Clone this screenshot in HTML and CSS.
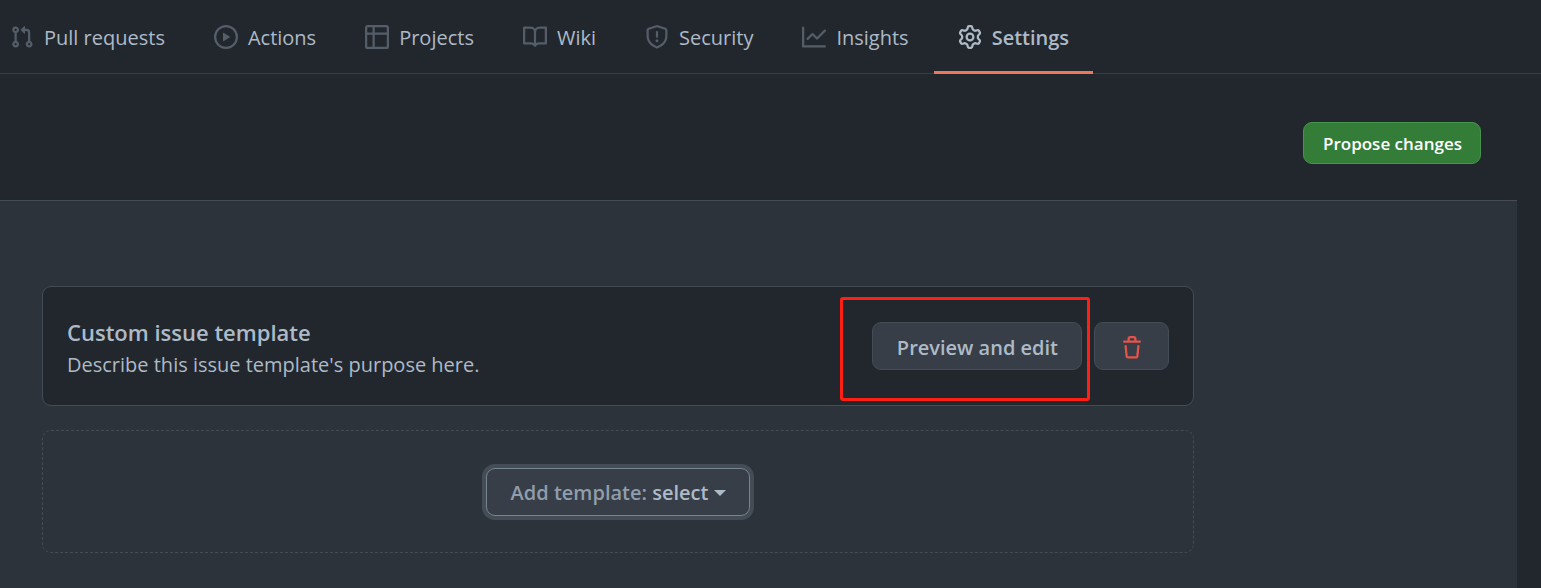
FILE: index.html
```html
<!DOCTYPE html>
<html lang="en">
<head>
<meta charset="utf-8">
<title>Settings - Issue templates</title>
<link rel="stylesheet" href="styles.css">
</head>
<body>
<nav class="tabs" aria-label="Repository">
  <a class="tab" href="#"><svg class="icon" viewBox="0 0 16 16" aria-hidden="true"><path fill-rule="evenodd" d="M7.177 3.073L9.573.677A.25.25 0 0110 .854v4.792a.25.25 0 01-.427.177L7.177 3.427a.25.25 0 010-.354zM3.75 2.5a.75.75 0 100 1.5.75.75 0 000-1.5zm-2.25.75a2.25 2.25 0 113 2.122v5.256a2.251 2.251 0 11-1.5 0V5.372A2.25 2.25 0 011.5 3.25zM11 2.5h-1V4h1a1 1 0 011 1v5.628a2.251 2.251 0 101.5 0V5A2.5 2.5 0 0011 2.5zm1 10.25a.75.75 0 111.5 0 .75.75 0 01-1.5 0zM3.75 12a.75.75 0 100 1.5.75.75 0 000-1.5z"/></svg>Pull requests</a>
  <a class="tab" href="#"><svg class="icon" viewBox="0 0 16 16" aria-hidden="true"><path fill-rule="evenodd" d="M1.5 8a6.5 6.5 0 1113 0 6.5 6.5 0 01-13 0zM8 0a8 8 0 100 16A8 8 0 008 0zM6.379 5.227A.25.25 0 006 5.442v5.117a.25.25 0 00.379.214l4.264-2.559a.25.25 0 000-.428L6.379 5.227z"/></svg>Actions</a>
  <a class="tab" href="#"><svg class="icon" viewBox="0 0 16 16" aria-hidden="true"><path fill-rule="evenodd" d="M0 1.75C0 .784.784 0 1.75 0h12.5C15.216 0 16 .784 16 1.75v12.5A1.75 1.75 0 0114.25 16H1.75A1.75 1.75 0 010 14.25V1.75zM1.5 6.5v7.75c0 .138.112.25.25.25H5v-8H1.500zM5 5H1.500V1.750a.25.25 0 01.25-.25H5V5zm1.500 1.500v8h7.750a.25.25 0 00.25-.25V6.500h-8zm8-1.500h-8V1.500h7.750a.25.25 0 01.25.25V5z"/></svg>Projects</a>
  <a class="tab" href="#"><svg class="icon" viewBox="0 0 16 16" aria-hidden="true"><path fill-rule="evenodd" d="M0 1.75A.75.75 0 01.75 1h4.253c1.227 0 2.317.59 3 1.501A3.744 3.744 0 0111.006 1h4.245a.75.75 0 01.75.75v10.5a.75.75 0 01-.75.75h-4.507a2.25 2.25 0 00-1.591.659l-.622.621a.75.75 0 01-1.06 0l-.622-.621A2.25 2.25 0 005.258 13H.75a.75.75 0 01-.75-.75V1.75zm8.755 3a2.25 2.25 0 012.25-2.25H14.500v9h-3.757c-.71 0-1.4.201-1.992.572l.004-7.322zm-1.504 7.324l.004-5.073-.002-2.253A2.25 2.25 0 005.003 2.500H1.500v9h3.757a3.750 3.750 0 011.994.574z"/></svg>Wiki</a>
  <a class="tab" href="#"><svg class="icon" viewBox="0 0 16 16" aria-hidden="true"><path fill-rule="evenodd" d="M7.467.133a1.750 1.750 0 011.066 0l5.250 1.680A1.750 1.750 0 0115 3.480V7c0 1.566-.32 3.182-1.303 4.682-.983 1.498-2.585 2.813-5.032 3.855a1.700 1.700 0 01-1.330 0c-2.447-1.042-4.049-2.357-5.032-3.855C1.320 10.182 1 8.566 1 7V3.480a1.750 1.750 0 011.217-1.667l5.250-1.680zm.61 1.429a.25.25 0 00-.153 0l-5.250 1.680a.25.25 0 00-.174.238V7c0 1.358.275 2.666 1.057 3.860.784 1.194 2.121 2.340 4.366 3.297a.2.2 0 00.154 0c2.245-.956 3.582-2.104 4.366-3.298C13.225 9.666 13.500 8.360 13.500 7V3.480a.25.25 0 00-.174-.237l-5.250-1.680zM9 10.500a1 1 0 11-2 0 1 1 0 012 0zm-.25-5.750a.75.75 0 10-1.500 0v3a.75.75 0 001.500 0v-3z"/></svg>Security</a>
  <a class="tab" href="#"><svg class="icon" viewBox="0 0 16 16" aria-hidden="true"><path fill-rule="evenodd" d="M1.500 1.750a.75.75 0 00-1.500 0v12.500c0 .414.336.75.75.75h14.500a.75.75 0 000-1.500H1.500V1.750zm14.280 2.530a.75.75 0 00-1.060-1.060L10 7.940 7.530 5.470a.75.75 0 00-1.060 0L3.220 8.720a.75.75 0 001.060 1.060L7 7.060l2.470 2.470a.75.75 0 001.060 0l5.250-5.250z"/></svg>Insights</a>
  <a class="tab tab-current" href="#" aria-current="page"><svg class="icon" viewBox="0 0 16 16" aria-hidden="true"><path fill-rule="evenodd" d="M7.429 1.525a6.593 6.593 0 011.142 0c.036.003.108.036.137.146l.289 1.105c.147.56.55.967.997 1.189.174.086.341.183.501.290.417.278.970.423 1.530.270l1.102-.303c.110-.030.175.016.195.046.219.310.410.641.573.989.014.031.022.110-.059.190l-.815.806c-.411.406-.562.957-.530 1.456a4.588 4.588 0 010 .582c-.032.499.119 1.050.530 1.456l.815.806c.080.080.073.159.059.190a6.494 6.494 0 01-.573.990c-.020.029-.086.074-.195.045l-1.103-.303c-.559-.153-1.112-.008-1.529.270-.160.107-.327.204-.500.290-.449.222-.851.628-.998 1.189l-.289 1.105c-.029.110-.101.143-.137.146a6.613 6.613 0 01-1.142 0c-.036-.003-.108-.037-.137-.146l-.289-1.105c-.147-.560-.550-.967-.997-1.189a4.502 4.502 0 01-.501-.290c-.417-.278-.970-.423-1.530-.270l-1.102.303c-.110.030-.175-.016-.195-.046a6.492 6.492 0 01-.573-.989c-.014-.031-.022-.110.059-.190l.815-.806c.411-.406.562-.957.530-1.456a4.587 4.587 0 010-.582c.032-.499-.119-1.050-.530-1.456l-.815-.806c-.080-.080-.073-.159-.059-.190a6.440 6.440 0 01.573-.990c.020-.029.086-.075.195-.045l1.103.303c.559.153 1.112.008 1.529-.270.160-.107.327-.204.500-.290.449-.222.851-.628.998-1.189l.289-1.105c.029-.110.101-.143.137-.146zM8 0c-.236 0-.470.010-.701.030-.743.065-1.290.615-1.458 1.261l-.290 1.106c-.017.066-.078.158-.211.224a5.994 5.994 0 00-.668.386c-.123.082-.233.090-.300.071L3.270 2.776c-.644-.177-1.392.020-1.820.630a7.977 7.977 0 00-.704 1.217c-.315.675-.111 1.422.363 1.891l.815.806c.050.048.098.147.088.294a6.084 6.084 0 000 .772c.010.147-.038.246-.088.294l-.815.806c-.474.469-.678 1.216-.363 1.891.200.428.436.835.704 1.218.428.609 1.176.806 1.820.630l1.103-.303c.066-.019.176-.011.299.071.213.143.436.272.668.386.133.066.194.158.212.224l.289 1.106c.169.646.715 1.196 1.458 1.260a8.094 8.094 0 001.402 0c.743-.064 1.290-.614 1.458-1.260l.290-1.106c.017-.066.078-.158.211-.224a5.980 5.980 0 00.668-.386c.123-.082.233-.090.300-.071l1.102.302c.644.177 1.392-.020 1.820-.630.268-.382.505-.789.704-1.217.315-.675.111-1.422-.364-1.891l-.814-.806c-.050-.048-.098-.147-.088-.294a6.100 6.100 0 000-.772c-.010-.147.039-.246.088-.294l.814-.806c.475-.469.679-1.216.364-1.891a7.992 7.992 0 00-.704-1.218c-.428-.609-1.176-.806-1.820-.630l-1.103.303c-.066.019-.176.011-.299-.071a5.991 5.991 0 00-.668-.386c-.133-.066-.194-.158-.212-.224L10.160 1.290C9.990.645 9.444.095 8.701.031A8.094 8.094 0 008 0zm1.500 8a1.500 1.500 0 11-3 0 1.500 1.500 0 013 0zM11 8a3 3 0 11-6 0 3 3 0 016 0z"/></svg>Settings</a>
</nav>
<main>
  <div class="actions">
    <button class="propose" type="button">Propose changes</button>
  </div>
  <div class="panel">
    <section class="card">
      <div class="card-text">
        <h2 class="card-title">Custom issue template</h2>
        <p class="card-description">Describe this issue template's purpose here.</p>
      </div>
      <div class="card-buttons">
        <div class="marked">
          <button class="btn" type="button">Preview and edit</button>
        </div>
        <button class="btn btn-danger" type="button" aria-label="Delete template"><svg class="icon" viewBox="0 0 16 16" aria-hidden="true"><path fill-rule="evenodd" d="M6.500 1.750a.25.25 0 01.25-.25h2.500a.25.25 0 01.25.25V3h-3V1.750zm4.500 0V3h2.250a.75.75 0 010 1.500H2.750a.75.75 0 010-1.500H5V1.750C5 .784 5.784 0 6.750 0h2.500C10.216 0 11 .784 11 1.750zM4.496 6.675a.75.75 0 10-1.492.150l.660 6.600A1.750 1.750 0 005.405 15h5.190c.900 0 1.652-.681 1.741-1.576l.660-6.600a.75.75 0 00-1.492-.149l-.660 6.600a.25.25 0 01-.249.225h-5.190a.25.25 0 01-.249-.225l-.660-6.600z"/></svg></button>
      </div>
    </section>
    <section class="add">
      <button class="btn btn-add" type="button" aria-haspopup="menu"><span class="muted">Add template:</span> select<span class="caret"></span></button>
    </section>
  </div>
</main>
</body>
</html>
```
FILE: styles.css
```css
* {
  box-sizing: border-box;
}

body {
  margin: 0;
  min-height: 100vh;
  display: flex;
  flex-direction: column;
  overflow-x: hidden;
  background: #22272e;
  color: #adbac7;
  font: 20px/32px "Open Sans", "Noto Sans", sans-serif;
}

.icon {
  width: 24px;
  height: 24px;
  flex: none;
  fill: currentColor;
}

.tabs {
  display: flex;
  gap: 1px;
  height: 74px;
  padding-right: 24px;
  margin-left: -14px;
  border-bottom: 1px solid #373e47;
}

.tab {
  display: flex;
  align-items: center;
  gap: 10px;
  height: 74px;
  padding: 5px 24px 0;
  border-bottom: 3px solid transparent;
  color: inherit;
  text-decoration: none;
  white-space: nowrap;
}

.tab .icon {
  margin-bottom: 2px;
  color: #545d68;
}

.tab-current {
  border-bottom-color: #ec775c;
  font-weight: 600;
}

.tab-current .icon {
  color: inherit;
}

main {
  flex: 1;
  display: flex;
  flex-direction: column;
}

.actions {
  display: flex;
  justify-content: flex-end;
  padding: 48px 60px 36px 24px;
}

.propose {
  height: 42px;
  padding: 2px 18px 0 19px;
  border: 1px solid #46954a;
  border-radius: 9px;
  background: #347d39;
  color: #fff;
  font: 600 17px/24px "Open Sans", "Noto Sans", sans-serif;
}

.panel {
  flex: 1;
  display: flex;
  flex-direction: column;
  gap: 24px;
  margin-right: 24px;
  padding: 85px 323px 35px 42px;
  border-top: 1px solid #444c56;
  background: #2d333b;
}

.card {
  display: flex;
  align-items: center;
  justify-content: space-between;
  min-height: 120px;
  padding: 24px;
  border: 1px solid #444c56;
  border-radius: 9px;
  background: #22272e;
}

.card-text {
  padding-top: 4px;
}

.card-title,
.card-description {
  margin: 0;
}

.card-title {
  font-size: 22px;
  line-height: 34px;
  font-weight: 600;
}

.card-buttons {
  display: flex;
  gap: 12px;
}

.btn {
  display: flex;
  align-items: center;
  justify-content: center;
  height: 48px;
  padding: 3px 23px 0 24px;
  border: 1px solid #444c56;
  border-radius: 9px;
  background: #373e47;
  color: #adbac7;
  font: 600 20px/32px "Open Sans", "Noto Sans", sans-serif;
  white-space: pre;
}

.btn-danger {
  width: 75px;
  color: #e5534b;
}

.marked {
  position: relative;
}

.marked::after {
  content: "";
  position: absolute;
  inset: -25px -8px -31px -32px;
  border: 3px solid #ff1f13;
  border-radius: 3px;
  pointer-events: none;
}

.add {
  display: flex;
  align-items: center;
  justify-content: center;
  min-height: 123px;
  border: 1px dashed #444c56;
  border-radius: 9px;
}

.btn-add {
  border-color: #768390;
  box-shadow: 0 0 0 4px #444c56;
}

.muted {
  color: #909dab;
}

.caret {
  margin-left: 6px;
  border: 6px solid transparent;
  border-top-color: currentColor;
  border-bottom: 0;
}
```
